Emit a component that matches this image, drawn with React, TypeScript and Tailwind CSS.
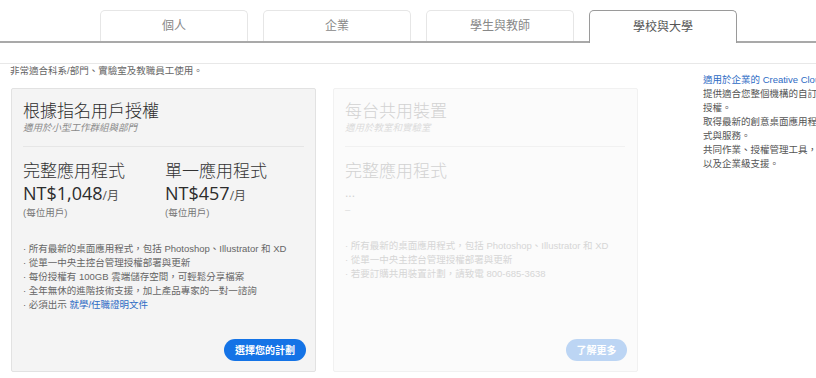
import React from "react";

const font = { fontFamily: '"Liberation Sans", "Noto Sans CJK TC", sans-serif' };
const latin = { fontFamily: '"Open Sans", "Noto Sans CJK TC", sans-serif' };

function Tab({ label, active }: { label: string; active?: boolean }) {
  if (active) {
    return (
      <div className="w-[148px] h-[33px] -mb-[2px] rounded-t-[5px] border border-b-0 border-[#9a9a9a] bg-white flex items-center justify-center text-[12px] text-[#555]">
        {label}
      </div>
    );
  }
  return (
    <div className="w-[148px] h-[31px] rounded-t-[5px] border border-b-0 border-[#e6e6e6] bg-white flex items-center justify-center text-[12px] text-[#888]">
      {label}
    </div>
  );
}

export default function App() {
  return (
    <div className="w-[816px] h-[378px] overflow-hidden bg-white" style={font}>
      {/* tabs */}
      <div className="pt-[10px] border-b-2 border-[#a9a9a9] flex items-end pl-[100px] gap-[15px]">
        <Tab label="個人" />
        <Tab label="企業" />
        <Tab label="學生與教師" />
        <Tab label="學校與大學" active />
      </div>
      <div className="h-[20px]" />
      <div className="h-px bg-[#e8e8e8]" />

      <div className="flex">
        <div className="pl-[10px] w-[650px] shrink-0">
          <div className="pt-[1px] text-[9.5px] leading-[12px] text-[#666]">
            非常適合科系/部門、實驗室及教職員工使用。
          </div>
          <div className="mt-[11px] ml-[1px] flex gap-[17px]">
            {/* card 1 */}
            <div className="w-[305px] h-[284px] bg-[#f4f4f4] border border-[#e2e2e2] rounded-[2px] flex flex-col pt-[12px] pl-[11px] pr-[9px] pb-[10px]">
              <div className="text-[17px] leading-[21px] text-[#2c2c2c] font-light">根據指名用戶授權</div>
              <div className="text-[9.5px] leading-[12px] italic text-[#8a8a8a]">適用於小型工作群組與部門</div>
              <div className="mt-[12px] h-px bg-[#e6e6e6] mr-[2px]" />
              <div className="mt-[15px] flex">
                <div className="w-[142px]">
                  <div className="text-[17px] leading-[20px] text-[#333] font-light">完整應用程式</div>
                  <div className="text-[18px] leading-[22px] text-[#2c2c2c]" style={latin}>
                    NT$1,048<span className="text-[12px] text-[#555]">/月</span>
                  </div>
                  <div className="text-[9.5px] leading-[12px] text-[#777]">(每位用戶)</div>
                </div>
                <div>
                  <div className="text-[17px] leading-[20px] text-[#333] font-light">單一應用程式</div>
                  <div className="text-[18px] leading-[22px] text-[#2c2c2c]" style={latin}>
                    NT$457<span className="text-[12px] text-[#555]">/月</span>
                  </div>
                  <div className="text-[9.5px] leading-[12px] text-[#777]">(每位用戶)</div>
                </div>
              </div>
              <div className="mt-[23px] text-[9.5px] leading-[14px] text-[#666] whitespace-nowrap">
                <div>· 所有最新的桌面應用程式，包括 Photoshop、Illustrator 和 XD</div>
                <div>· 從單一中央主控台管理授權部署與更新</div>
                <div>· 每份授權有 100GB 雲端儲存空間，可輕鬆分享檔案</div>
                <div>· 全年無休的進階技術支援，加上產品專家的一對一諮詢</div>
                <div>
                  · 必須出示 <span className="text-[#2d6bc4]">就學/任職證明文件</span>
                </div>
              </div>
              <div className="mt-auto flex justify-end">
                <button className="h-[22px] w-[82px] rounded-full bg-[#1473e6] text-white text-[10px] font-bold">
                  選擇您的計劃
                </button>
              </div>
            </div>
            {/* card 2 */}
            <div className="w-[305px] h-[284px] bg-[#fbfbfb] border border-[#f1f1f1] rounded-[2px] flex flex-col pt-[12px] pl-[11px] pr-[10px] pb-[10px]">
              <div className="text-[17px] leading-[21px] text-[#d2d2d2] font-light">每台共用裝置</div>
              <div className="text-[9.5px] leading-[12px] italic text-[#dcdcdc]">適用於教室和實驗室</div>
              <div className="mt-[12px] h-px bg-[#f1f1f1] mr-[2px]" />
              <div className="mt-[15px]">
                <div className="text-[17px] leading-[20px] text-[#d2d2d2] font-light">完整應用程式</div>
                <div className="text-[12px] leading-[22px] text-[#d2d2d2]">...</div>
                <div className="text-[9.5px] leading-[12px] text-[#dcdcdc]">–</div>
              </div>
              <div className="mt-[23px] text-[9.5px] leading-[14px] text-[#d6d6d6] whitespace-nowrap">
                <div>· 所有最新的桌面應用程式，包括 Photoshop、Illustrator 和 XD</div>
                <div>· 從單一中央主控台管理授權部署與更新</div>
                <div>· 若要訂購共用裝置計劃，請致電 800-685-3638</div>
              </div>
              <div className="mt-auto flex justify-end">
                <button className="h-[22px] w-[61px] rounded-full bg-[#bcd5f4] text-white text-[10px] font-bold">
                  了解更多
                </button>
              </div>
            </div>
          </div>
        </div>
        <div className="ml-[53px] pt-[9px] w-[116px] shrink-0 text-[9.5px] leading-[14px] text-[#555]">
          <div className="text-[#2d6bc4] whitespace-nowrap">適用於企業的 Creative Cloud</div>
          <div>提供適合您整個機構的自訂授權。</div>
          <div>取得最新的創意桌面應用程式與服務。</div>
          <div>共同作業、授權管理工具，以及企業級支援。</div>
        </div>
      </div>
    </div>
  );
}
